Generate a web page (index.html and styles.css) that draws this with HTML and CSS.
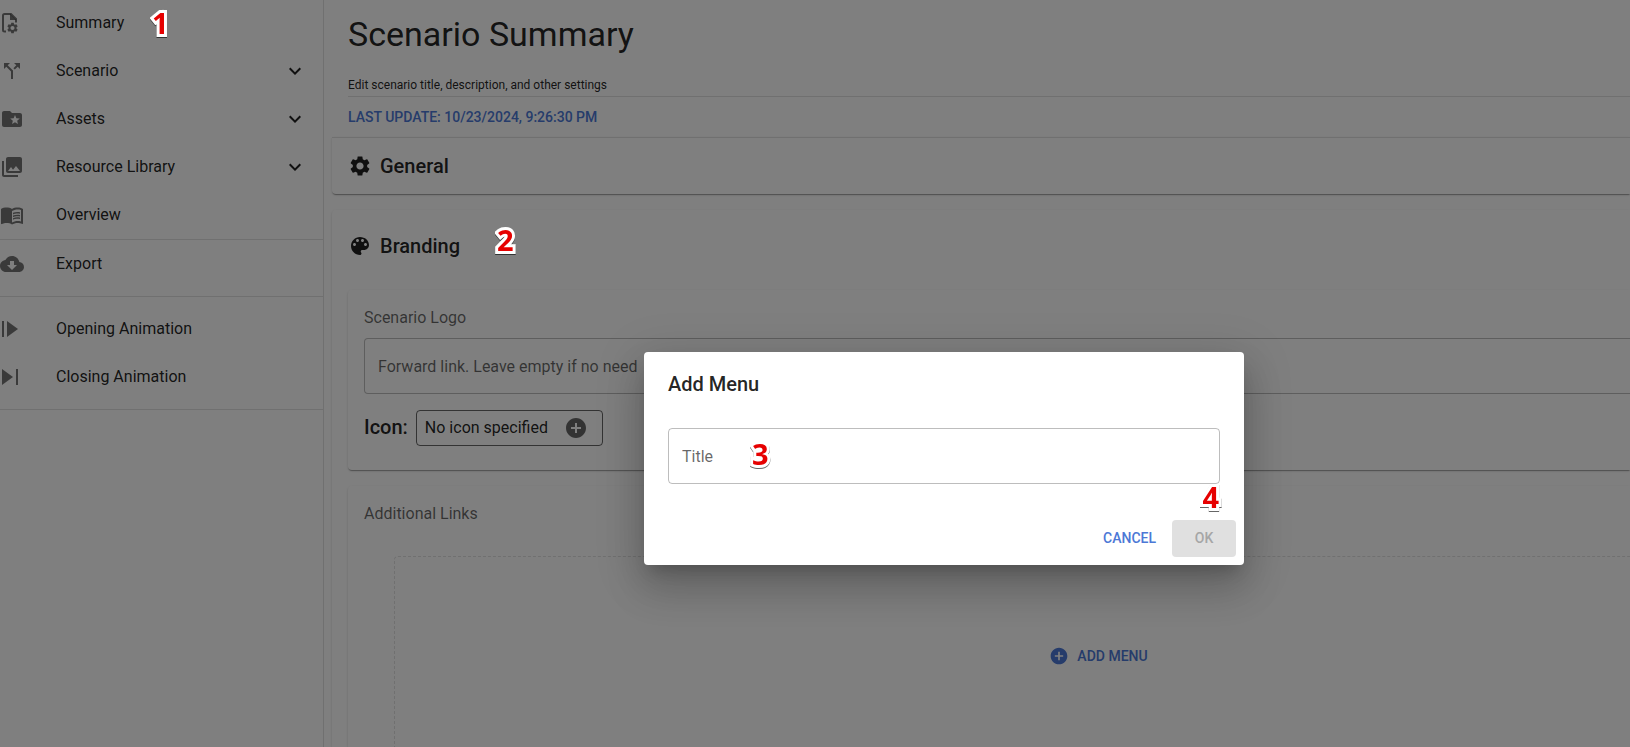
FILE: index.html
```html
<!DOCTYPE html>
<html lang="en">
<head>
<meta charset="utf-8">
<title>Scenario Summary</title>
<link rel="stylesheet" href="styles.css">
</head>
<body>
<div class="screen">
  <div class="app">
    <nav class="sidebar" aria-label="Scenario editor">
      <div class="nav-group nav-group-first">
        <a class="nav-item" href="#summary"><svg class="icon" viewBox="0 0 24 24"><path d="M6 20.500H4.500Q3 20.500 3 19V4.500Q3 3 4.500 3H11L16 8V11.500" fill="none" stroke="currentColor" stroke-width="2"/><path d="M10 3v6h6z"/><path transform="translate(5.900 10.400) scale(.55)" d="M19.140 12.940c.04-.3.060-.61.060-.94 0-.32-.02-.64-.07-.94l2.030-1.580c.18-.14.23-.41.12-.61l-1.920-3.320c-.12-.22-.37-.29-.59-.22l-2.390.96c-.5-.38-1.030-.7-1.620-.94l-.36-2.540c-.04-.24-.24-.41-.48-.41h-3.840c-.24 0-.43.17-.47.41l-.36 2.540c-.59.24-1.130.57-1.620.94l-2.390-.96c-.22-.08-.47 0-.59.22L2.740 8.870c-.12.21-.08.47.12.61l2.030 1.580c-.05.3-.09.63-.09.94s.02.640.07.94l-2.030 1.580c-.18.14-.23.41-.12.61l1.920 3.320c.12.22.37.29.59.22l2.390-.96c.5.38 1.030.7 1.620.94l.36 2.540c.05.24.24.41.48.41h3.840c.24 0 .44-.17.47-.41l.36-2.540c.59-.24 1.130-.56 1.620-.94l2.390.96c.22.080.47 0 .59-.22l1.920-3.320c.12-.22.070-.47-.12-.61l-2.010-1.580zM12 15.600c-1.980 0-3.600-1.620-3.600-3.600s1.620-3.600 3.600-3.600 3.600 1.620 3.600 3.600-1.620 3.600-3.600 3.600z"/></svg><span class="nav-label">Summary</span></a>
        <a class="nav-item" href="#scenario"><svg class="icon" viewBox="0 0 24 24"><path d="M14 4l2.290 2.290-2.880 2.880 1.420 1.420 2.880-2.880L20 10V4zM10 4H4v6l2.290-2.290 4.710 4.700V20h2v-8.410l-5.290-5.300z"/></svg><span class="nav-label">Scenario</span><svg class="icon chevron" viewBox="0 0 24 24"><path d="M16.590 8.590 12 13.170 7.410 8.590 6 10l6 6 6-6z"/></svg></a>
        <a class="nav-item" href="#assets"><svg class="icon" viewBox="0 0 24 24"><path d="M20 6h-8l-2-2H4c-1.100 0-1.990.9-1.990 2L2 18c0 1.100.9 2 2 2h16c1.100 0 2-.9 2-2V8c0-1.100-.9-2-2-2zm-2.060 11L15 15.280 12.060 17l.78-3.330-2.590-2.240 3.410-.29L15 8l1.340 3.140 3.410.29-2.590 2.240.78 3.330z"/></svg><span class="nav-label">Assets</span><svg class="icon chevron" viewBox="0 0 24 24"><path d="M16.590 8.590 12 13.170 7.410 8.590 6 10l6 6 6-6z"/></svg></a>
        <a class="nav-item" href="#resources"><svg class="icon" viewBox="0 0 24 24"><path d="M22 16V4c0-1.100-.9-2-2-2H8c-1.100 0-2 .9-2 2v12c0 1.100.9 2 2 2h12c1.100 0 2-.9 2-2zm-11-4l2.030 2.710L16 11l4 5H8l3-4zM2 6v14c0 1.100.9 2 2 2h14v-2H4V6H2z"/></svg><span class="nav-label">Resource Library</span><svg class="icon chevron" viewBox="0 0 24 24"><path d="M16.590 8.590 12 13.170 7.410 8.590 6 10l6 6 6-6z"/></svg></a>
        <a class="nav-item" href="#overview"><svg class="icon" viewBox="0 0 24 24"><path d="M21 5c-1.110-.35-2.330-.5-3.500-.5-1.950 0-4.050.4-5.500 1.500-1.450-1.100-3.550-1.500-5.500-1.500S2.450 4.900 1 6v14.650c0 .25.25.5.5.5.1 0 .15-.05.25-.05C3.100 20.450 5.050 20 6.500 20c1.950 0 4.050.4 5.500 1.500 1.350-.85 3.800-1.500 5.500-1.500 1.650 0 3.350.3 4.750 1.050.1.050.15.050.25.050.25 0 .5-.25.5-.5V6c-.6-.45-1.250-.75-2-1zm0 13.500c-1.100-.35-2.300-.5-3.500-.5-1.700 0-4.150.65-5.500 1.500V8c1.350-.85 3.800-1.500 5.500-1.500 1.200 0 2.400.15 3.500.5v11.500z"/><path d="M17.500 10.500c.88 0 1.730.09 2.500.26V9.240c-.79-.15-1.640-.24-2.500-.24-1.700 0-3.240.29-4.500.83v1.660c1.130-.64 2.700-.99 4.500-.99zM13 12.490v1.660c1.130-.64 2.700-.99 4.500-.99.88 0 1.730.09 2.500.26V11.900c-.79-.15-1.640-.24-2.500-.24-1.700 0-3.240.3-4.500.83zM17.500 14.330c-1.700 0-3.240.29-4.500.83v1.660c1.130-.64 2.700-.99 4.500-.99.88 0 1.730.09 2.500.26v-1.520c-.79-.16-1.640-.24-2.500-.24z"/></svg><span class="nav-label">Overview</span></a>
      </div>
      <div class="nav-group nav-group-export">
        <a class="nav-item" href="#export"><svg class="icon" viewBox="0 0 24 24"><path d="M19.350 10.040C18.670 6.590 15.640 4 12 4 9.110 4 6.600 5.640 5.350 8.040 2.340 8.360 0 10.910 0 14c0 3.310 2.690 6 6 6h13c2.760 0 5-2.240 5-5 0-2.640-2.050-4.780-4.650-4.960zM17 13l-5 5-5-5h3V9h4v4h3z"/></svg><span class="nav-label">Export</span></a>
      </div>
      <div class="nav-group nav-group-animation">
        <a class="nav-item" href="#opening"><svg class="icon" viewBox="0 0 24 24"><path d="M2 4h2v16H2zM7 4v16l11-8z"/></svg><span class="nav-label">Opening Animation</span></a>
        <a class="nav-item" href="#closing"><svg class="icon" viewBox="0 0 24 24"><path d="M2 4v16l11-8zM16 4h2v16h-2z"/></svg><span class="nav-label">Closing Animation</span></a>
      </div>
    </nav>

    <main class="content">
      <header class="page-header">
        <h1 class="page-title">Scenario Summary</h1>
        <p class="page-hint">Edit scenario title, description, and other settings</p>
        <p class="last-update">LAST UPDATE: 10/23/2024, 9:26:30 PM</p>
      </header>

      <section class="panel panel-general">
        <h2 class="panel-title"><svg class="icon" viewBox="0 0 24 24"><path d="M19.140 12.940c.04-.3.060-.61.060-.94 0-.32-.02-.64-.07-.94l2.030-1.580c.18-.14.23-.41.12-.61l-1.920-3.320c-.12-.22-.37-.29-.59-.22l-2.390.96c-.5-.38-1.030-.7-1.620-.94l-.36-2.540c-.04-.24-.24-.41-.48-.41h-3.840c-.24 0-.43.17-.47.41l-.36 2.540c-.59.24-1.130.57-1.620.94l-2.390-.96c-.22-.08-.47 0-.59.22L2.740 8.870c-.12.21-.08.47.12.61l2.030 1.580c-.05.3-.09.63-.09.94s.02.640.07.94l-2.030 1.580c-.18.14-.23.41-.12.61l1.920 3.320c.12.22.37.29.59.22l2.390-.96c.5.38 1.030.7 1.620.94l.36 2.540c.05.24.24.41.48.41h3.840c.24 0 .44-.17.47-.41l.36-2.540c.59-.24 1.130-.56 1.620-.94l2.390.96c.22.080.47 0 .59-.22l1.920-3.320c.12-.22.070-.47-.12-.61l-2.010-1.580zM12 15.600c-1.980 0-3.600-1.620-3.600-3.600s1.620-3.600 3.600-3.600 3.600 1.620 3.600 3.600-1.620 3.600-3.600 3.600z"/></svg>General</h2>
      </section>

      <section class="panel panel-branding">
        <h2 class="panel-title"><svg class="icon" viewBox="0 0 24 24"><path d="M12 3c-4.970 0-9 4.030-9 9s4.030 9 9 9c.83 0 1.500-.67 1.500-1.500 0-.39-.15-.74-.39-1.010-.23-.26-.38-.61-.38-.99 0-.83.67-1.500 1.500-1.500H16c2.760 0 5-2.240 5-5 0-4.420-4.030-8-9-8zm-5.500 9c-.83 0-1.500-.67-1.500-1.500S5.670 9 6.500 9 8 9.670 8 10.500 7.330 12 6.500 12zm3-4C8.670 8 8 7.330 8 6.500S8.670 5 9.500 5s1.500.67 1.500 1.500S10.330 8 9.500 8zm5 0c-.83 0-1.500-.67-1.500-1.500S13.670 5 14.500 5s1.500.67 1.500 1.500S15.330 8 14.500 8zm3 4c-.83 0-1.500-.67-1.500-1.500S16.670 9 17.500 9s1.500.67 1.500 1.500-.67 1.500-1.500 1.500z"/></svg>Branding</h2>
        <div class="card">
          <label class="card-label" for="forward-link">Scenario Logo</label>
          <input class="field field-open" id="forward-link" type="text" placeholder="Forward link. Leave empty if no need">
          <div class="icon-row">
            <span class="icon-caption">Icon:</span>
            <button class="icon-picker" type="button">No icon specified<svg class="icon" viewBox="0 0 24 24"><path d="M12 2C6.480 2 2 6.480 2 12s4.480 10 10 10 10-4.480 10-10S17.520 2 12 2zm5 11h-4v4h-2v-4H7v-2h4V7h2v4h4v2z"/></svg></button>
          </div>
        </div>
        <div class="card card-links">
          <h3 class="card-label">Additional Links</h3>
          <div class="drop-zone">
            <button class="add-menu" type="button"><svg class="icon icon-small" viewBox="0 0 24 24"><path d="M12 2C6.480 2 2 6.480 2 12s4.480 10 10 10 10-4.480 10-10S17.520 2 12 2zm5 11h-4v4h-2v-4H7v-2h4V7h2v4h4v2z"/></svg>ADD MENU</button>
          </div>
        </div>
      </section>
    </main>
  </div>

  <div class="backdrop">
    <div class="dialog" role="dialog" aria-modal="true" aria-labelledby="dialog-title">
      <h2 class="dialog-title" id="dialog-title">Add Menu</h2>
      <div class="dialog-body">
        <input class="field" type="text" placeholder="Title" aria-label="Title">
      </div>
      <div class="dialog-actions">
        <button class="button" type="button">CANCEL</button>
        <button class="button button-disabled" type="button" disabled>OK</button>
      </div>
      <span class="marker marker-title">3</span>
      <span class="marker marker-ok">4</span>
    </div>
  </div>
  <span class="marker marker-summary">1</span>
  <span class="marker marker-branding">2</span>
</div>
</body>
</html>
```

FILE: styles.css
```css
:root {
  --text: rgba(0, 0, 0, 0.87);
  --muted: rgba(0, 0, 0, 0.6);
  --line: rgba(0, 0, 0, 0.12);
  --primary: #4c78d6;
}

* {
  box-sizing: border-box;
}

html,
body {
  height: 100%;
}

body {
  margin: 0;
  background: #fff;
  color: var(--text);
  font: 400 16px/24px Roboto, "Liberation Sans", sans-serif;
}

h1,
h2,
h3,
p {
  margin: 0;
}

button,
input {
  font: inherit;
  color: inherit;
}

.screen {
  position: relative;
  height: 100%;
  overflow: hidden;
}

.app {
  display: flex;
  height: 100%;
}

.icon {
  width: 24px;
  height: 24px;
  flex: none;
  fill: currentColor;
}

.icon-small {
  width: 20px;
  height: 20px;
}

/* Sidebar */
.sidebar {
  flex: 0 0 324px;
  border-right: 1px solid var(--line);
}

.nav-group {
  border-bottom: 1px solid var(--line);
}

.nav-group-first {
  margin-top: -1px;
}

.nav-group-export {
  padding-bottom: 8px;
}

.nav-group-animation {
  padding: 8px 0;
}

.nav-item {
  display: flex;
  align-items: center;
  height: 48px;
  padding-right: 16px;
  color: inherit;
  text-decoration: none;
}

.nav-item .icon {
  color: rgba(0, 0, 0, 0.54);
}

.nav-item .chevron {
  color: var(--text);
}

.nav-label {
  flex: 1;
  padding-left: 32px;
}

/* Content: panels run to the right edge of the window */
.content {
  display: flex;
  flex: 1;
  flex-direction: column;
  min-width: 0;
  padding-left: 8px;
}

.page-header {
  padding: 14px 0 0 16px;
}

.page-title {
  font-size: 34px;
  font-weight: 400;
  line-height: 40px;
}

.page-hint {
  padding-top: 20px;
  border-bottom: 1px solid var(--line);
  font-size: 12px;
  line-height: 22px;
}

.last-update {
  padding: 8px 0;
  color: var(--primary);
  font-size: 14px;
  font-weight: 500;
}

.panel,
.card {
  border-radius: 4px 0 0 4px;
  box-shadow: 0 2px 1px -1px rgba(0, 0, 0, 0.2), 0 1px 1px rgba(0, 0, 0, 0.14), 0 1px 3px rgba(0, 0, 0, 0.12);
}

.panel {
  padding: 16px 0 16px 16px;
}

.panel-general {
  border-top: 1px solid var(--line);
  border-radius: 0 0 0 4px;
}

.panel-branding {
  display: flex;
  flex: 1;
  flex-direction: column;
  min-height: 0;
  margin-top: 16px;
  padding-top: 24px;
  padding-bottom: 0;
  border-radius: 4px 0 0 0;
}

.panel-title {
  display: flex;
  align-items: center;
  gap: 8px;
  font-size: 20px;
  font-weight: 500;
}

.panel-branding .panel-title {
  margin-bottom: 32px;
}

.card {
  padding: 16px 0 16px 16px;
  margin-bottom: 16px;
}

.card-links {
  display: flex;
  flex: 1;
  flex-direction: column;
  min-height: 0;
  margin-bottom: 0;
  padding-bottom: 0;
  border-radius: 4px 0 0 0;
}

.card-label {
  display: block;
  margin-bottom: 8px;
  color: var(--muted);
  font-size: 16px;
  font-weight: 400;
}

.field {
  display: block;
  width: 100%;
  height: 56px;
  padding: 0 13px;
  border: 1px solid rgba(0, 0, 0, 0.26);
  border-radius: 4px;
  background: transparent;
}

.field-open {
  border-right: 0;
  border-radius: 4px 0 0 4px;
}

.field::placeholder {
  color: var(--muted);
  opacity: 1;
}

.icon-row {
  display: flex;
  align-items: flex-start;
  gap: 8px;
  padding: 16px 0 8px;
}

.icon-caption {
  font-size: 20px;
  font-weight: 500;
  line-height: 34px;
}

.icon-picker {
  display: flex;
  align-items: center;
  gap: 16px;
  height: 36px;
  padding: 0 14px 0 8px;
  border: 1px solid var(--muted);
  border-radius: 4px;
  background: transparent;
}

.icon-picker .icon {
  color: var(--muted);
}

.drop-zone {
  display: grid;
  place-items: center;
  flex: none;
  height: 200px;
  margin: 22px 0 0 30px;
  padding-left: 172px;
  border: 1px dashed var(--line);
  border-right: 0;
  border-radius: 4px 0 0 4px;
}

.add-menu {
  display: flex;
  align-items: center;
  gap: 8px;
  padding: 6px 8px;
  border: 0;
  background: transparent;
  color: var(--primary);
  font-size: 14px;
  font-weight: 500;
}

/* Dialog */
.backdrop {
  position: absolute;
  inset: 0;
  display: grid;
  place-items: center;
  padding: 170px 0 0 258px;
  background: rgba(0, 0, 0, 0.5);
}

.dialog {
  position: relative;
  width: 600px;
  border-radius: 4px;
  background: #fff;
  box-shadow: 0 11px 15px -7px rgba(0, 0, 0, 0.2), 0 24px 38px 3px rgba(0, 0, 0, 0.14), 0 9px 46px 8px rgba(0, 0, 0, 0.12);
}

.dialog-title {
  padding: 16px 24px;
  font-size: 20px;
  font-weight: 500;
  line-height: 32px;
}

.dialog-body {
  padding: 12px 24px 28px;
}

.dialog-actions {
  display: flex;
  justify-content: flex-end;
  gap: 8px;
  padding: 8px;
}

.button {
  min-width: 64px;
  height: 37px;
  padding: 0 8px 2px;
  border: 0;
  border-radius: 4px;
  background: transparent;
  color: var(--primary);
  font-size: 14px;
  font-weight: 500;
}

.button-disabled {
  background: #e0e0e0;
  color: #a6a6a6;
}

/* Numbered callouts */
.marker {
  position: absolute;
  color: #e60000;
  font: 700 29px/30px "Noto Sans", "Open Sans", sans-serif;
  -webkit-text-stroke: 6px #fff;
  stroke-linejoin: round;
  paint-order: stroke fill;
  filter: drop-shadow(0 1px 0 rgba(0, 0, 0, 0.6));
}

.marker-summary {
  left: 152px;
  top: 8px;
}

.marker-branding {
  left: 497px;
  top: 225px;
}

.marker-title {
  left: 108px;
  top: 87px;
}

.marker-ok {
  right: 25px;
  top: 130px;
}
```
